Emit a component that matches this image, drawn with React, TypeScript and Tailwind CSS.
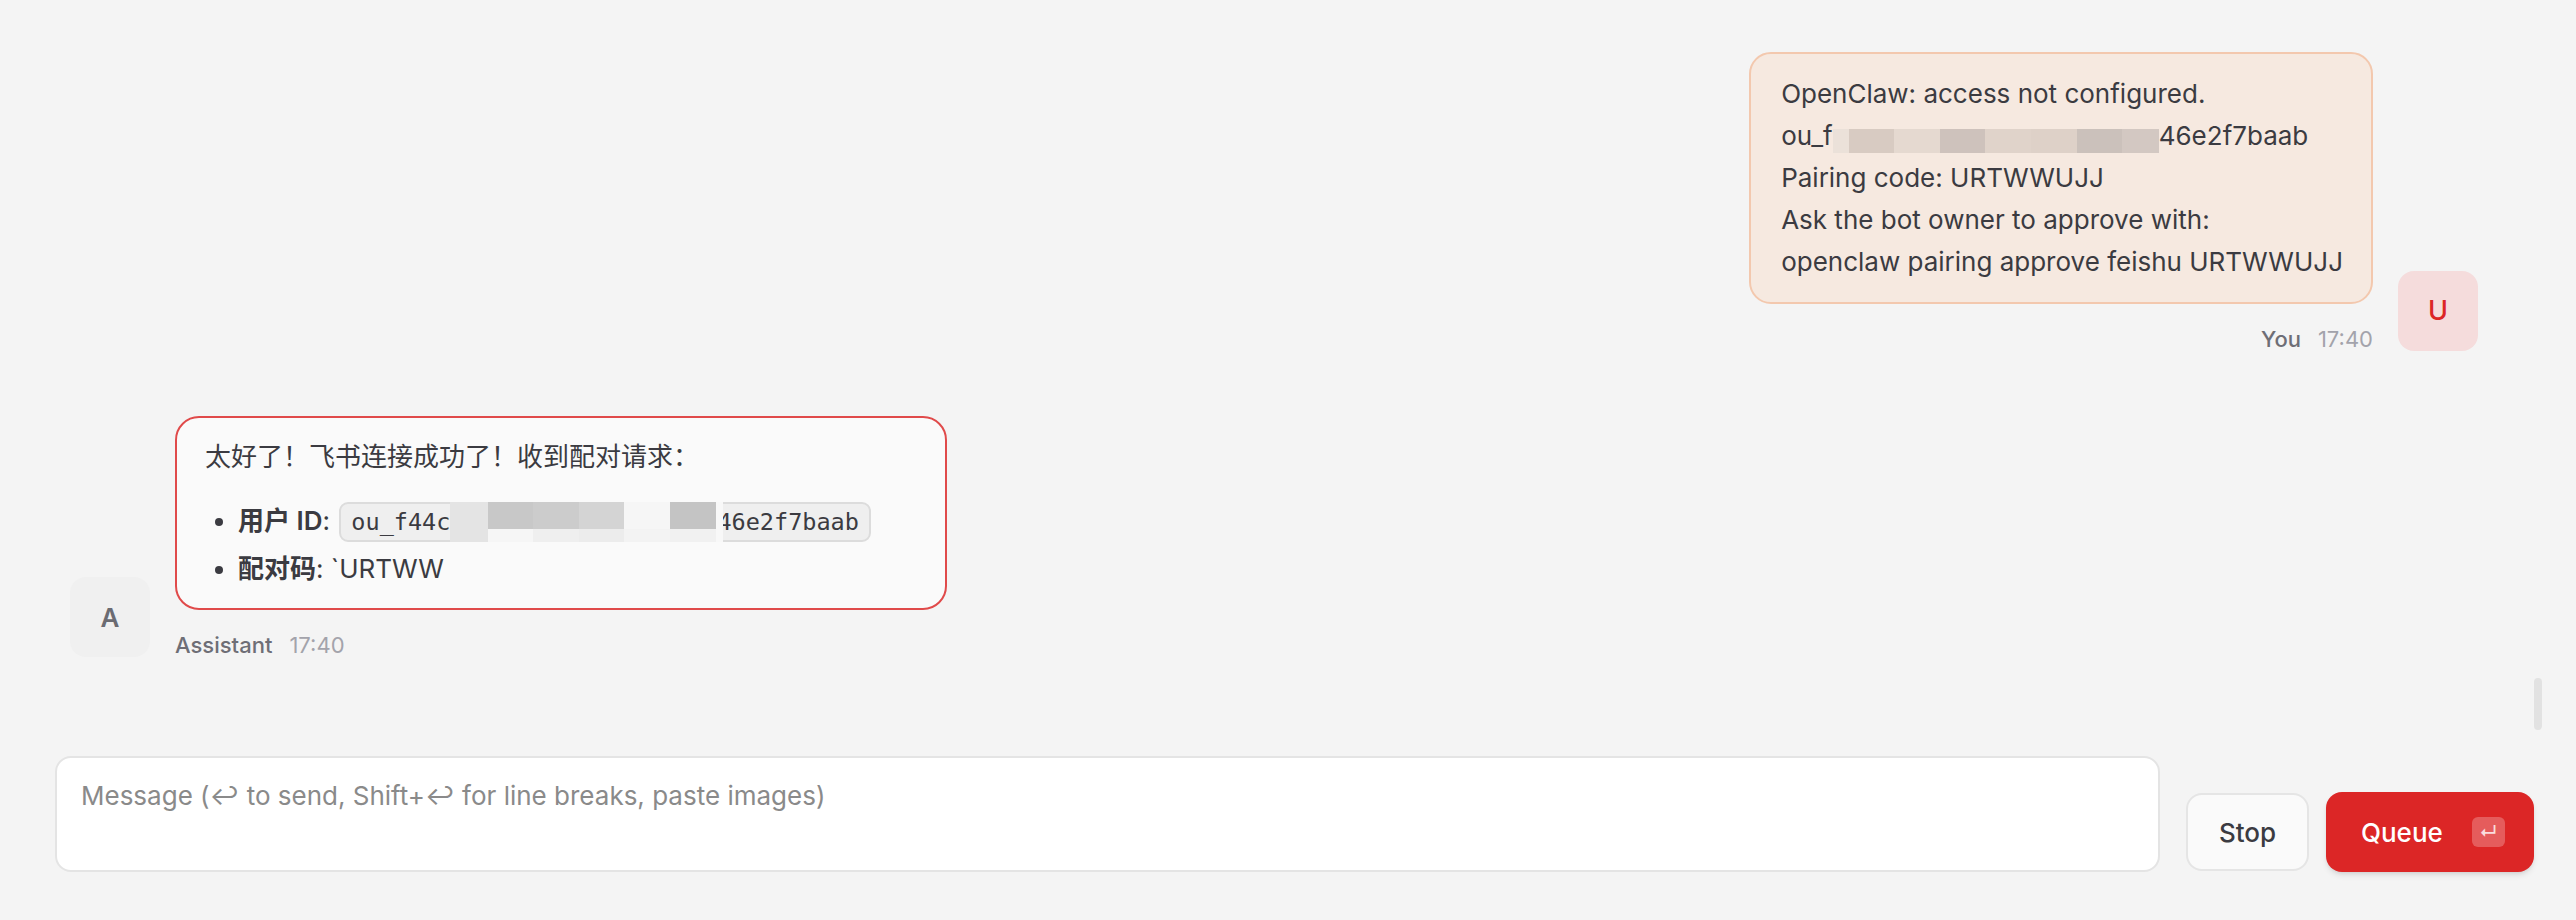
const userMosaic: [number, string][] = [
  [16, "#ebe1d9"],
  [45, "#d8cbc2"],
  [46, "#e5d9d0"],
  [45, "#cec2bc"],
  [46, "#e0d3ca"],
  [46, "#ded1c8"],
  [45, "#cbc1bb"],
  [37, "#d3c8c2"],
];

// [width, top colour, bottom colour]
const codeMosaic: [number, string, string][] = [
  [38, "#e4e4e4", "#e4e4e4"],
  [45, "#c8c8c8", "#f6f6f6"],
  [46, "#cccccc", "#efefef"],
  [45, "#d4d4d4", "#ececec"],
  [46, "#f6f6f6", "#f3f3f3"],
  [46, "#c4c4c4", "#f1f1f1"],
  [7, "#f8f8f8", "#f8f8f8"],
];

function Meta({ name, time }: { name: string; time: string }) {
  return (
    <div className="mt-[20px] flex gap-[17px] text-[22px] leading-[30px]">
      <span className="font-medium text-[#6e6e76]">{name}</span>
      <span className="text-[#a3a3ab]">{time}</span>
    </div>
  );
}

export default function App() {
  return (
    <div className="h-[920px] w-full bg-[#f4f4f4] flex flex-col overflow-hidden font-['Inter','Noto_Sans_CJK_SC',sans-serif] text-[#3b3b41]">
      {/* Thread */}
      <div className="relative flex-1 min-h-0 flex flex-col pl-[70px] pr-[98px] pt-[52px]">
        {/* User message */}
        <div className="flex justify-end items-end gap-[25px]">
          <div className="flex flex-col items-end">
            <div className="rounded-[22px] border-2 border-[#f3c8ae] bg-[#f6e9e0] pl-[30px] pr-[28px] py-[19px] text-[26px] leading-[42px] whitespace-nowrap">
              <div>OpenClaw: access not configured.</div>
              <div>
                ou_f
                <span className="inline-flex h-[24px] align-[-8px]">
                  {userMosaic.map(([w, c], i) => (
                    <span key={i} className="h-full" style={{ width: w, background: c }} />
                  ))}
                </span>
                46e2f7baab
              </div>
              <div>Pairing code: URTWWUJJ</div>
              <div>Ask the bot owner to approve with:</div>
              <div>openclaw pairing approve feishu URTWWUJJ</div>
            </div>
            <Meta name="You" time="17:40" />
          </div>
          <div className="mb-[3px] w-[80px] h-[80px] rounded-[16px] bg-[#f5dcdc] flex items-center justify-center text-[27px] font-medium text-[#dc2626]">
            U
          </div>
        </div>

        {/* Assistant message */}
        <div className="mt-[62px] flex items-end gap-[25px]">
          <div className="mb-[3px] w-[80px] h-[80px] rounded-[16px] bg-[#f0f0f0] flex items-center justify-center text-[26px] font-semibold text-[#6b6b72]">
            A
          </div>
          <div className="flex flex-col items-start">
            <div className="w-[772px] rounded-[24px] border-2 border-[#e04a4a] bg-[#fafafa] pl-[28px] pr-[28px] py-[18px] text-[26px] leading-[42px]">
              <p className="mb-[22px]">太好了！飞书连接成功了！收到配对请求：</p>
              <ul className="list-disc pl-[33px]">
                <li>
                  <span className="font-semibold">用户 ID</span>:{" "}
                  <code className="ml-[2px] inline-flex items-center h-[40px] px-[10px] border-2 border-[#dcdcdc] rounded-[9px] bg-[#efefef] font-['DejaVu_Sans_Mono',monospace] text-[23.5px] leading-[36px] text-[#3b3b41]">
                    <span>ou_f44c</span>
                    <span className="relative z-10 self-stretch -my-[2px] flex">
                      {codeMosaic.map(([w, t, b], i) => (
                        <span key={i} className="flex flex-col" style={{ width: w }}>
                          <span className="h-[27px]" style={{ background: t }} />
                          <span className="flex-1" style={{ background: b }} />
                        </span>
                      ))}
                    </span>
                    <span className="-ml-[6px]">46e2f7baab</span>
                  </code>
                </li>
                <li className="mt-[6px]">
                  <span className="font-semibold">配对码</span>: `URTWW
                </li>
              </ul>
            </div>
            <Meta name="Assistant" time="17:40" />
          </div>
        </div>

        {/* scrollbar thumb */}
        <div className="absolute right-[34px] top-[678px] w-[8px] h-[52px] rounded-full bg-[#e2e2e2]" />
      </div>

      {/* Composer */}
      <div className="flex items-end pl-[55px] pr-[42px] pb-[48px]">
        <textarea
          className="flex-1 h-[116px] rounded-[16px] border-2 border-[#e4e4e4] bg-white px-[24px] pt-[17px] text-[26px] leading-[42px] resize-none outline-none placeholder:text-[#8a8a8a]"
          placeholder="Message (↩ to send, Shift+↩ for line breaks, paste images)"
        />
        <button className="ml-[26px] mb-[1px] w-[123px] h-[78px] rounded-[16px] border-2 border-[#e5e5e5] bg-[#fafafa] text-[26px] font-medium text-[#3b3b41]">
          Stop
        </button>
        <button className="ml-[17px] w-[208px] h-[80px] rounded-[16px] bg-[#dc2626] shadow-md shadow-black/10 flex items-center pl-[35px] gap-[29px] text-[26px] font-medium text-white">
          <span>Queue</span>
          <span className="w-[33px] h-[30px] rounded-[6px] bg-white/25 flex items-center justify-center text-[18px] text-white/80">
            ↵
          </span>
        </button>
      </div>
    </div>
  );
}
